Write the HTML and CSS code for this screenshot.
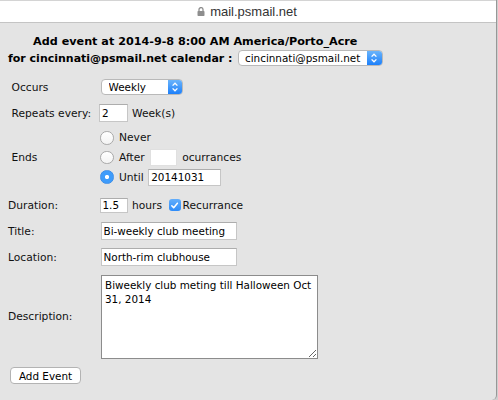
FILE: index.html
```html
<!DOCTYPE html>
<html>
<head>
<meta charset="utf-8">
<link rel="stylesheet" href="styles.css">
</head>
<body>
<div class="window">
  <div class="topbar">
    <svg class="lock" width="8" height="9" viewBox="0 0 8 9"><path d="M2 4.2V2.6a2 2 0 0 1 4 0V4.2" fill="none" stroke="#8e8e8e" stroke-width="1.3"/><rect x="0.5" y="4" width="7" height="5" rx="0.8" fill="#8e8e8e"/></svg>
    <span class="url">mail.psmail.net</span>
  </div>
  <div class="content">
    <div class="heading">
      <div class="h-line1">Add event at 2014-9-8 8:00 AM America/Porto_Acre</div>
      <div class="h-line2">
        <span>for cincinnati@psmail.net calendar :</span>
        <span class="sel sel-cal"><select><option>cincinnati@psmail.net</option></select><span class="stepper"><svg width="14" height="14" viewBox="0 0 14 14"><polyline points="4.6,5.6 7,3.2 9.4,5.6" fill="none" stroke="#fff" stroke-width="1.3"/><polyline points="4.6,8.4 7,10.8 9.4,8.4" fill="none" stroke="#fff" stroke-width="1.3"/></svg></span></span>
      </div>
    </div>

    <div class="row r-occurs">
      <div class="label ind">Occurs</div>
      <span class="sel sel-occ"><select><option>Weekly</option></select><span class="stepper"><svg width="14" height="14" viewBox="0 0 14 14"><polyline points="4.6,5.6 7,3.2 9.4,5.6" fill="none" stroke="#fff" stroke-width="1.3"/><polyline points="4.6,8.4 7,10.8 9.4,8.4" fill="none" stroke="#fff" stroke-width="1.3"/></svg></span></span>
    </div>

    <div class="row r-repeats">
      <div class="label ind">Repeats every:</div>
      <input class="txt w-rep" type="text" value="2">
      <span class="after-txt">Week(s)</span>
    </div>

    <div class="row r-ends">
      <div class="label ind">Ends</div>
      <div class="opts">
        <div class="opt"><input class="radio" type="radio" name="ends"><span class="opt-txt">Never</span></div>
        <div class="opt"><input class="radio" type="radio" name="ends"><span class="opt-txt">After</span><input class="txt w-after" type="text" value=""><span class="opt-tail">ocurrances</span></div>
        <div class="opt"><input class="radio" type="radio" name="ends" checked><span class="opt-txt">Until</span><input class="txt w-until" type="text" value="20141031"></div>
      </div>
    </div>

    <div class="row r-duration">
      <div class="label">Duration:</div>
      <input class="txt w-dur" type="text" value="1.5">
      <span class="after-txt">hours</span>
      <span class="check"><svg width="11" height="11" viewBox="0 0 11 11"><polyline points="2.8,5.8 4.7,7.8 8.4,3.2" fill="none" stroke="#fff" stroke-width="1.5" stroke-linecap="round" stroke-linejoin="round"/></svg></span>
      <span class="check-txt">Recurrance</span>
    </div>

    <div class="row r-title">
      <div class="label">Title:</div>
      <input class="txt w-title" type="text" value="Bi-weekly club meeting">
    </div>

    <div class="row r-location">
      <div class="label">Location:</div>
      <input class="txt w-title" type="text" value="North-rim clubhouse">
    </div>

    <div class="row r-desc">
      <div class="label">Description:</div>
      <textarea class="area">Biweekly club meting till Halloween Oct 31, 2014</textarea>
    </div>

    <div class="r-button">
      <button class="btn" type="button">Add Event</button>
    </div>
  </div>
</div>
</body>
</html>
```

FILE: styles.css
```css
* { box-sizing: border-box; }

body {
  margin: 0;
  background: #cfcfcf;
  font-family: "DejaVu Sans", Verdana, sans-serif;
  font-size: 10.7px;
  color: #111;
}

.window {
  width: 497px;
  height: 400px;
  background: #e4e4e4;
  border-right: 1px solid #979797;
  border-bottom-right-radius: 5px;
  overflow: hidden;
}

.topbar {
  height: 23px;
  background: #fff;
  border-top: 1px solid #d4d4d4;
  border-bottom: 1px solid #c4c4c4;
  display: flex;
  align-items: center;
  justify-content: center;
  gap: 5px;
  padding-right: 2px;
  font-family: "Liberation Sans", Arial, sans-serif;
  font-size: 13px;
  color: #333;
}

.lock { display: block; }

.content {
  padding: 11px 0 0 8px;
}

.heading {
  display: inline-block;
  text-align: center;
  font-weight: bold;
  font-size: 11px;
  color: #000;
}

.h-line1 {
  height: 15px;
  line-height: 15px;
  font-size: 11.2px;
}

.h-line2 {
  height: 18px;
  display: flex;
  align-items: center;
  justify-content: center;
  gap: 5px;
}

.sel {
  display: inline-flex;
  height: 16px;
  background: #fff;
  border: 1px solid #b9b9b9;
  border-radius: 4px;
  overflow: hidden;
  font-weight: normal;
}

.sel select {
  appearance: none;
  -webkit-appearance: none;
  border: 0;
  background: transparent;
  flex: 1;
  min-width: 0;
  height: 100%;
  padding: 0 0 0 6.5px;
  margin: 0;
  font-family: "DejaVu Sans", Verdana, sans-serif;
  font-size: 10.4px;
  color: #000;
  outline: none;
}

.stepper {
  flex: none;
  width: 14px;
  display: flex;
  align-items: center;
  justify-content: center;
  background: linear-gradient(#6ab4fb, #1d80fa);
}

.sel-cal { width: 145px; }
.sel-cal .stepper { width: 15px; }
.sel-occ { width: 82px; margin-left: 2px; }

.row {
  display: flex;
  align-items: center;
  height: 20px;
  margin-top: 6px;
}

.label {
  width: 91px;
  flex: none;
}

.ind { padding-left: 3.5px; }

.r-occurs { margin-top: 10px; }

.txt {
  margin: 0;
  height: 18px;
  background: #fff;
  border: 1px solid #c6c6c6;
  border-top-color: #adadad;
  padding: 0 2px;
  font-family: "DejaVu Sans", Verdana, sans-serif;
  font-size: 10.4px;
  color: #000;
  outline: none;
}

.w-rep { width: 28.5px; }
.w-dur { width: 28px; height: 15px; margin-left: 0.5px; }
.w-after { width: 27.5px; height: 16.5px; margin-left: 5px; border-color: #e0e0e0; }
.w-until { width: 73px; height: 17px; margin-left: 4.5px; }
.w-title { width: 136px; margin-left: 1.5px; }

.after-txt { margin-left: 4.5px; }

.r-ends {
  height: auto;
  margin-top: 5px;
}

.opts {
  display: flex;
  flex-direction: column;
  margin-left: 1px;
}

.opt {
  display: flex;
  align-items: center;
  height: 19.7px;
}

.radio {
  appearance: none;
  -webkit-appearance: none;
  margin: 0;
  width: 13.5px;
  height: 13.5px;
  border-radius: 50%;
  border: 1px solid #a9a9a9;
  background: linear-gradient(#fff, #f3f3f3);
}

.radio:checked {
  border-color: #3f8fe8;
  background: radial-gradient(circle, #fff 0 1.8px, #3e9cfb 2.4px);
}

.opt-txt { margin-left: 5.5px; }
.opt-tail { margin-left: 5px; }

.r-duration { margin-top: 8px; }

.check {
  display: inline-flex;
  width: 11.5px;
  height: 11.5px;
  margin-left: 7px;
  border-radius: 3px;
  background: linear-gradient(#63aefb, #2d8cfa);
  align-items: center;
  justify-content: center;
}

.check-txt { margin-left: 2px; }

.r-location { margin-top: 6px; }

.r-desc {
  height: auto;
  margin-top: 8px;
}

.area {
  margin: 0 0 0 2px;
  width: 217px;
  height: 83.5px;
  border: 1px solid #8c8c8c;
  background: #fff;
  padding: 2px 3px;
  font-family: "DejaVu Sans", Verdana, sans-serif;
  font-size: 10.4px;
  line-height: 14px;
  color: #000;
  outline: none;
  resize: both;
}

.r-button {
  margin-top: 8.5px;
}

.btn {
  margin: 0 0 0 2px;
  width: 71px;
  height: 17px;
  padding: 0;
  background: #fff;
  border: 1px solid #b3b3b3;
  border-radius: 4px;
  font-family: "DejaVu Sans", Verdana, sans-serif;
  font-size: 10.4px;
  color: #000;
}
```
